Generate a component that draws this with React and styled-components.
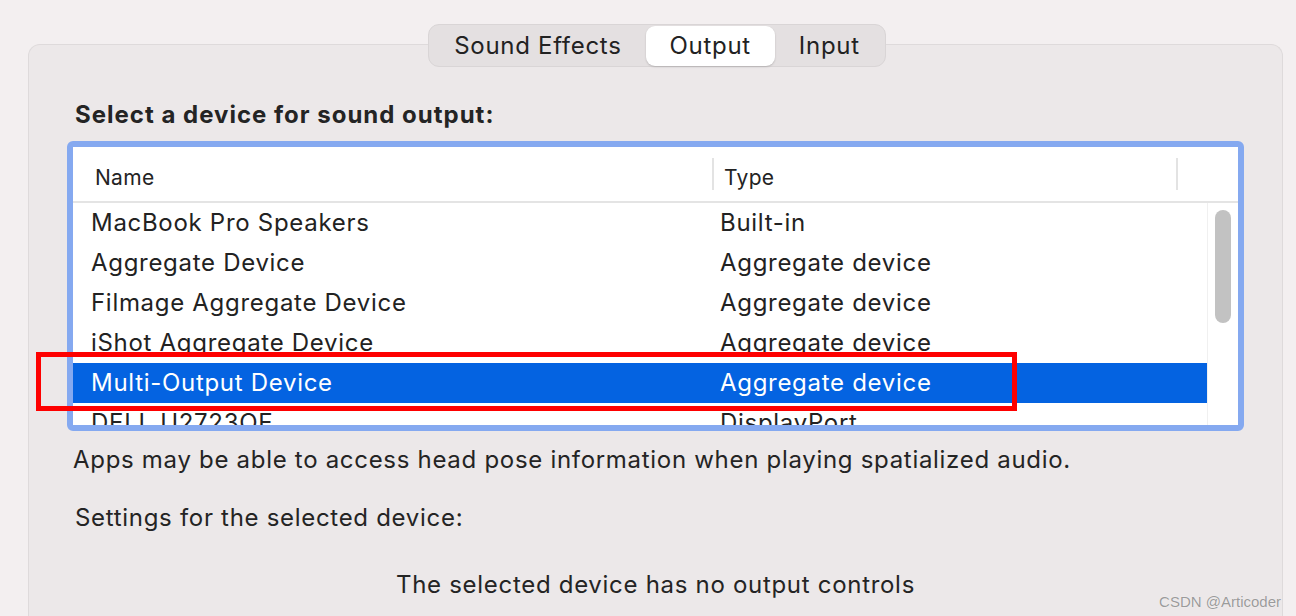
import React from 'react'
import styled, { createGlobalStyle } from 'styled-components'

const GlobalStyle = createGlobalStyle`
    html, body {
        margin: 0;
        padding: 0;
        background: #f3eff0;
        overflow: hidden;
    }
    #root {
        height: 616px;
    }
`

const Page = styled.div`
    position: relative;
    height: 616px;
    display: flex;
    flex-direction: column;
    padding: 24px 13px 0 28px;
    box-sizing: border-box;
    font-family: Inter, 'Noto Sans', sans-serif;
    color: #242424;
`

const Tabs = styled.div`
    position: relative;
    z-index: 1;
    align-self: center;
    margin-left: 3px;
    margin-bottom: -23px;
    display: flex;
    align-items: center;
    height: 43px;
    box-sizing: border-box;
    padding: 1px;
    background: #e4e0e1;
    border: 1px solid #d9d5d6;
    border-radius: 11px;
`

const Tab = styled.div`
    height: 40px;
    display: flex;
    align-items: center;
    padding: 0 24px;
    font-size: 24px;
    letter-spacing: 0.7px;
    border-radius: 9px;
    color: #222;
    background: ${p => (p.active ? '#ffffff' : 'transparent')};
    box-shadow: ${p => (p.active ? '0 1px 2px rgba(0, 0, 0, 0.18)' : 'none')};
`

const Panel = styled.div`
    flex: 1;
    background: #ece8e9;
    border: 1px solid #dedadb;
    border-bottom: none;
    border-radius: 12px 12px 0 0;
    padding: 56px 38px 0 38px;
    display: flex;
    flex-direction: column;
`

const Heading = styled.h4`
    margin: 0 0 12px 8px;
    font-size: 24px;
    font-weight: 700;
    line-height: 28px;
    letter-spacing: 1px;
`

const Table = styled.div`
    height: 290px;
    box-sizing: border-box;
    border: 6px solid #85a9f0;
    border-radius: 6px;
    background: #ffffff;
    display: flex;
    flex-direction: column;
    overflow: hidden;
`

const HeaderRow = styled.div`
    height: 56px;
    flex-shrink: 0;
    box-sizing: border-box;
    display: grid;
    grid-template-columns: 617px 2px 462px 2px 1fr;
    align-items: center;
    padding: 6px 0 0 22px;
    border-bottom: 2px solid #e4e4e4;
    font-size: 21px;
    letter-spacing: 0.3px;
`

const HeaderSep = styled.div`
    height: 32px;
    margin-top: -6px;
    background: #e3e3e3;
`

const HeaderCell = styled.div`
    padding-left: ${p => p.pad || 0}px;
`

const Body = styled.div`
    flex: 1;
    display: flex;
    overflow: hidden;
`

const Rows = styled.div`
    flex: 1;
    display: flex;
    flex-direction: column;
`

const Row = styled.div`
    height: 40px;
    flex-shrink: 0;
    display: grid;
    grid-template-columns: 629px 1fr;
    align-items: center;
    padding-left: 18px;
    font-size: 24px;
    line-height: 28px;
    letter-spacing: 0.7px;
    background: ${p => (p.selected ? '#0463e1' : 'transparent')};
    color: ${p => (p.selected ? '#ffffff' : '#222')};
`

const ScrollTrack = styled.div`
    width: 31px;
    flex-shrink: 0;
    border-left: 1px solid #f0f0f0;
    box-sizing: border-box;
    padding: 7px 0 0 7px;
`

const ScrollThumb = styled.div`
    width: 16px;
    height: 113px;
    border-radius: 8px;
    background: #c2c2c2;
`

const Note = styled.p`
    margin: ${p => p.top}px 0 0 ${p => p.left}px;
    font-size: 24px;
    line-height: 28px;
    letter-spacing: 0.7px;
    text-align: ${p => p.align || 'left'};
`

const Highlight = styled.div`
    position: absolute;
    left: 36px;
    top: 352px;
    width: 981px;
    height: 59px;
    box-sizing: border-box;
    border: 5px solid #fe0000;
    pointer-events: none;
`

const Watermark = styled.div`
    position: absolute;
    right: 15px;
    bottom: 6px;
    font-family: 'Liberation Sans', Arial, sans-serif;
    font-size: 15px;
    color: #9b9b9b;
    text-shadow: 0 0 1px #ffffff;
`

const devices = [
    ['MacBook Pro Speakers', 'Built-in'],
    ['Aggregate Device', 'Aggregate device'],
    ['Filmage Aggregate Device', 'Aggregate device'],
    ['iShot Aggregate Device', 'Aggregate device'],
    ['Multi-Output Device', 'Aggregate device'],
    ['DELL U2723QE', 'DisplayPort']
]

export default function App() {
    return (
        <>
            <GlobalStyle />
            <Page>
                <Tabs>
                    <Tab>{'Sound Effects'}</Tab>
                    <Tab active>{'Output'}</Tab>
                    <Tab>{'Input'}</Tab>
                </Tabs>
                <Panel>
                    <Heading>{'Select a device for sound output:'}</Heading>
                    <Table>
                        <HeaderRow>
                            <HeaderCell>{'Name'}</HeaderCell>
                            <HeaderSep />
                            <HeaderCell pad={10}>{'Type'}</HeaderCell>
                            <HeaderSep />
                            <div />
                        </HeaderRow>
                        <Body>
                            <Rows>
                                {devices.map(([name, type], i) => (
                                    <Row key={name} selected={i === 4}>
                                        <div>{name}</div>
                                        <div>{type}</div>
                                    </Row>
                                ))}
                            </Rows>
                            <ScrollTrack>
                                <ScrollThumb />
                            </ScrollTrack>
                        </Body>
                    </Table>
                    <Note top={15} left={6}>
                        {'Apps may be able to access head pose information when playing spatialized audio.'}
                    </Note>
                    <Note top={30} left={8}>{'Settings for the selected device:'}</Note>
                    <Note top={39} left={0} align="center">
                        {'The selected device has no output controls'}
                    </Note>
                </Panel>
                <Highlight />
                <Watermark>{'CSDN @Articoder'}</Watermark>
            </Page>
        </>
    )
}
